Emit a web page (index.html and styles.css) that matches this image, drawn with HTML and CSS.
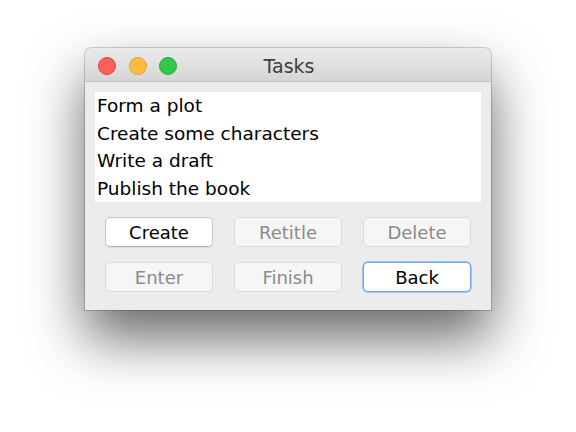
FILE: index.html
```html
<!DOCTYPE html>
<html>
<head>
<meta charset="utf-8">
<link rel="stylesheet" href="styles.css">
</head>
<body>
<div class="window">
  <div class="titlebar">
    <div class="lights">
      <span class="light red"></span>
      <span class="light yellow"></span>
      <span class="light green"></span>
    </div>
    <div class="title">Tasks</div>
  </div>
  <div class="content">
    <ul class="list">
      <li>Form a plot</li>
      <li>Create some characters</li>
      <li>Write a draft</li>
      <li>Publish the book</li>
    </ul>
    <div class="buttons">
      <button class="btn">Create</button>
      <button class="btn disabled">Retitle</button>
      <button class="btn disabled">Delete</button>
      <button class="btn disabled">Enter</button>
      <button class="btn disabled">Finish</button>
      <button class="btn focus">Back</button>
    </div>
  </div>
</div>
</body>
</html>
```

FILE: styles.css
```css
html, body {
  margin: 0;
  background: #ffffff;
}
body {
  width: 576px;
  height: 432px;
  padding: 48px 0 0 85px;
  box-sizing: border-box;
  font-family: "DejaVu Sans", sans-serif;
}
.window {
  width: 406px;
  height: 262px;
  background: #ececec;
  border-radius: 7px 7px 0 0;
  box-shadow: 0 0 0 1px rgba(0,0,0,0.18), 0 28px 56px rgba(0,0,0,0.6);
  display: flex;
  flex-direction: column;
}
.titlebar {
  height: 33px;
  border-bottom: 1px solid #c2c2c2;
  background: linear-gradient(#ebebeb, #d5d5d5);
  border-radius: 7px 7px 0 0;
  display: flex;
  align-items: center;
  position: relative;
}
.lights {
  display: flex;
  gap: 12.5px;
  padding-left: 13px;
  padding-top: 3px;
}
.light {
  width: 16px;
  height: 16px;
  border-radius: 50%;
  border: 1px solid;
}
.red { background: #fc605c; border-color: #e0443f; }
.yellow { background: #fdbc40; border-color: #dea236; }
.green { background: #34c84a; border-color: #28a93a; }
.title {
  position: absolute;
  left: 0;
  right: 0;
  top: 3px;
  bottom: 0;
  display: flex;
  align-items: center;
  justify-content: center;
  font-size: 19px;
  color: #404040;
  padding-left: 2px;
}
.content {
  padding: 10px 10px 0 10px;
  display: flex;
  flex-direction: column;
}
.list {
  list-style: none;
  margin: 0;
  padding: 0 0 0 2px;
  height: 110px;
  background: #ffffff;
  box-sizing: border-box;
}
.list li {
  height: 27.5px;
  line-height: 27.5px;
  font-size: 18.5px;
  color: #000;
}
.buttons {
  display: grid;
  grid-template-columns: repeat(3, 108px);
  column-gap: 21px;
  row-gap: 15px;
  padding: 15px 0 0 10px;
}
.btn {
  height: 30px;
  margin: 0;
  padding: 0;
  font-family: "DejaVu Sans", sans-serif;
  font-size: 18px;
  color: #000;
  background: #ffffff;
  border: 1px solid #c6c6c6;
  border-bottom-color: #b4b4b4;
  border-radius: 5px;
  box-shadow: 0 1px 0 rgba(0,0,0,0.06);
}
.btn.disabled {
  color: #8a8a8a;
  background: #f6f6f6;
  border-color: #dadada;
  box-shadow: none;
}
.btn.focus {
  border: 1px solid #6ea6ea;
  box-shadow: 0 0 0 1px rgba(110,166,234,0.55);
}
```
